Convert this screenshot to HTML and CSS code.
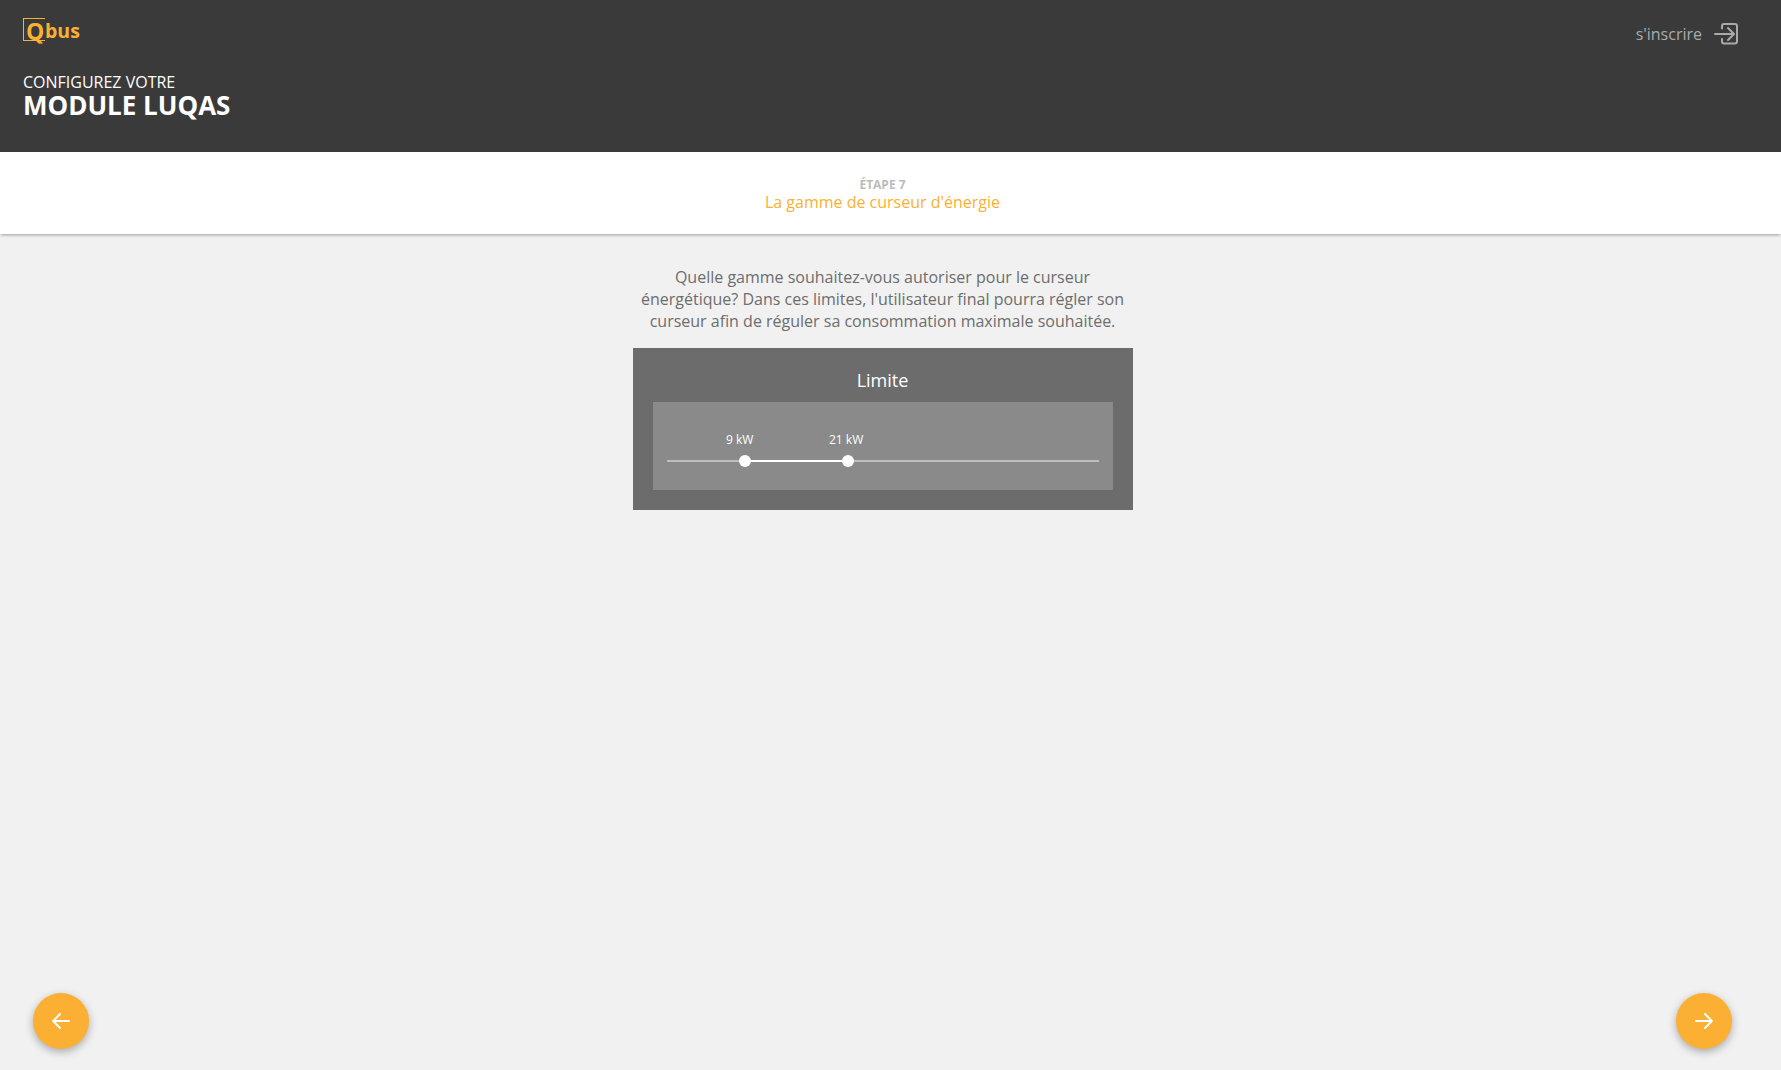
FILE: index.html
```html
<!DOCTYPE html>
<html lang="fr">
<head>
<meta charset="utf-8">
<title>Qbus</title>
<link rel="stylesheet" href="styles.css">
</head>
<body>
<div class="page">
  <header class="header">
    <div class="brand">
      <div class="logo"><span class="logo-box"></span><span class="logo-q">Q</span><span class="logo-text">bus</span></div>
      <div class="title-small">CONFIGUREZ VOTRE</div>
      <h1 class="title-big">MODULE LUQAS</h1>
    </div>
    <a class="login">
      <span>s'inscrire</span>
      <svg class="login-icon" width="26" height="24" viewBox="0 0 26 24" fill="none" stroke="#aaaaaa" stroke-width="2" stroke-linecap="round" stroke-linejoin="round"><path d="M9 6.500V4a2 2 0 0 1 2-2h11a2 2 0 0 1 2 2v15.500a2 2 0 0 1-2 2H11a2 2 0 0 1-2-2V17"/><path d="M2 12H20.500M15 6l6 6-6 6"/></svg>
    </a>
  </header>
  <div class="stepbar">
    <div class="step-num">ÉTAPE 7</div>
    <div class="step-name">La gamme de curseur d'énergie</div>
  </div>
  <main class="main">
    <p class="intro">Quelle gamme souhaitez-vous autoriser pour le curseur énergétique? Dans ces limites, l'utilisateur final pourra régler son curseur afin de réguler sa consommation maximale souhaitée.</p>
    <section class="card">
      <h2 class="card-title">Limite</h2>
      <div class="slider-box">
        <div class="slider">
          <div class="rail"></div>
          <div class="range"></div>
          <span class="thumb thumb-a"></span>
          <span class="thumb thumb-b"></span>
          <span class="val val-a">9 kW</span>
          <span class="val val-b">21 kW</span>
        </div>
      </div>
    </section>
  </main>
  <button class="fab fab-left" aria-label="Précédent">
    <svg width="18" height="16" viewBox="0 0 18 16" fill="none" stroke="#fff" stroke-width="2" stroke-linecap="round" stroke-linejoin="round"><path d="M17 8H1.500M8 1L1.200 8 8 15"/></svg>
  </button>
  <button class="fab fab-right" aria-label="Suivant">
    <svg width="18" height="16" viewBox="0 0 18 16" fill="none" stroke="#fff" stroke-width="2" stroke-linecap="round" stroke-linejoin="round"><path d="M1 8h15.500M10 1l6.800 7L10 15"/></svg>
  </button>
</div>
</body>
</html>
```
FILE: styles.css
```css
* { box-sizing: border-box; }
html, body { margin: 0; padding: 0; height: 100%; }
body { font-family: "Open Sans", sans-serif; background: #f1f1f1; color: #6d6d6d; }
.page { position: relative; height: 1070px; overflow: hidden; display: flex; flex-direction: column; }
.header { height: 152px; background: #3a3a3a; display: flex; justify-content: space-between; align-items: flex-start; padding: 18px 42px 0 23px; }
.logo { position: relative; height: 24px; }
.logo-box { position: absolute; left: 0; top: 0; width: 22px; height: 23px; border: 1px solid #fbb034; border-right: 0; }
.logo-q { position: absolute; left: 3px; top: -3px; font-size: 23px; line-height: 32px; font-weight: 700; color: #fbb034; }
.logo-text { position: absolute; left: 22px; top: -1px; font-size: 19.500px; line-height: 28px; font-weight: 700; color: #fbb034; }
.title-small { margin-top: 30px; font-size: 16px; line-height: 20px; color: #fff; }
.title-big { margin: 0; font-size: 26px; line-height: 26px; font-weight: 700; color: #fff; }
.login { display: flex; align-items: center; gap: 11px; margin-top: 4px; font-size: 16px; color: #aaa; }
.stepbar { height: 82px; background: #fff; text-align: center; padding: 25px 16px 0 0; box-shadow: 0 2px 3px -1px rgba(0,0,0,.35); position: relative; }
.step-num { font-size: 12px; font-weight: 700; line-height: 15px; color: #bbb; }
.step-name { font-size: 16px; line-height: 21px; color: #fbb034; }
.main { flex: 1; display: flex; flex-direction: column; align-items: center; padding: 32px 15px 0 0; }
.intro { width: 500px; margin: 0; padding-right: 1px; text-align: center; font-size: 16px; line-height: 22px; color: #6d6d6d; }
.card { width: 500px; height: 162px; margin-top: 16px; padding: 20px; background: #6c6c6c; }
.card-title { margin: 0 0 9px; height: 25px; padding: 1px 1px 0 0; font-size: 18px; line-height: 23px; font-weight: 400; color: #fff; text-align: center; }
.slider-box { height: 88px; background: #8a8a8a; padding: 0 14px; }
.slider { position: relative; height: 100%; }
.rail { position: absolute; left: 0; right: 0; top: 58px; height: 2px; background: #bdbdbd; }
.range { position: absolute; left: 78px; width: 103px; top: 58px; height: 2px; background: #fff; }
.thumb { position: absolute; top: 53px; width: 12px; height: 12px; border-radius: 50%; background: #fff; }
.thumb-a { left: 72px; }
.thumb-b { left: 175px; }
.val { position: absolute; top: 30px; font-size: 12px; line-height: 16px; color: #fff; }
.val-a { left: 59px; }
.val-b { left: 162px; }
.fab { position: absolute; top: 993px; width: 56px; height: 56px; padding: 0; border: 0; border-radius: 50%; background: #fbb034; display: flex; align-items: center; justify-content: center; box-shadow: 0 3px 8px rgba(0,0,0,.3); }
.fab-left { left: 33px; }
.fab-right { left: 1676px; }
```
